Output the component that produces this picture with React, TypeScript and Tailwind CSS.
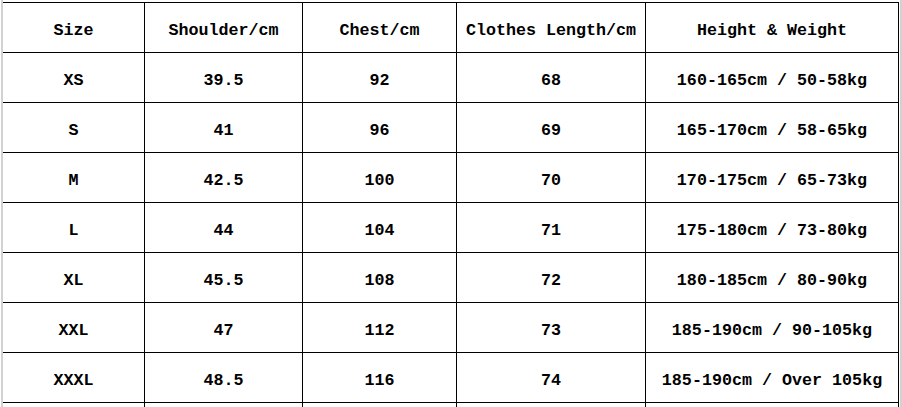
const headers = ["Size", "Shoulder/cm", "Chest/cm", "Clothes Length/cm", "Height & Weight"];

const rows = [
  ["XS", "39.5", "92", "68", "160-165cm / 50-58kg"],
  ["S", "41", "96", "69", "165-170cm / 58-65kg"],
  ["M", "42.5", "100", "70", "170-175cm / 65-73kg"],
  ["L", "44", "104", "71", "175-180cm / 73-80kg"],
  ["XL", "45.5", "108", "72", "180-185cm / 80-90kg"],
  ["XXL", "47", "112", "73", "185-190cm / 90-105kg"],
  ["XXXL", "48.5", "116", "74", "185-190cm / Over 105kg"],
  ["", "", "", "", ""],
];

function Row({ cells }: { cells: string[] }) {
  return (
    <div className="grid grid-cols-[142px_158px_154px_189px_253px]">
      {cells.map((c, i) => (
        <div
          key={i}
          className="h-[50px] border-b border-r border-black flex items-center justify-center pt-[7px]"
        >
          {c}
        </div>
      ))}
    </div>
  );
}

export default function App() {
  return (
    <div className="w-[902px] h-[407px] overflow-hidden bg-white flex">
      <div className="w-px" />
      <div className="w-[2px] bg-[#d2d2d2]" />
      <div
        className="mt-[2px] border-t border-black text-black font-bold text-[16.7px]"
        style={{ fontFamily: '"Liberation Mono", "DejaVu Sans Mono", monospace' }}
      >
        <Row cells={headers} />
        {rows.map((r, i) => (
          <Row key={i} cells={r} />
        ))}
      </div>
      <div className="w-px" />
      <div className="w-[2px] bg-[#d2d2d2]" />
    </div>
  );
}
